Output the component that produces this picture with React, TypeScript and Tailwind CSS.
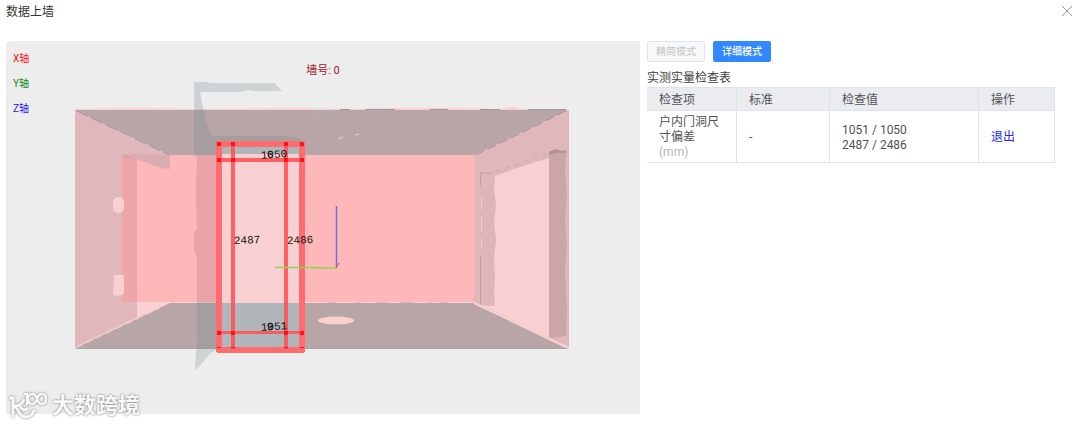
import React from "react";

const DOOR_X = [217, 231, 284, 300];
const DOOR_Y = [142, 158, 331, 347];

function RoomScene() {
  const joints = DOOR_X.flatMap((x) => DOOR_Y.map((y) => ({ x, y })));
  return (
    <svg viewBox="6 41 634 373" className="block w-full" role="img" aria-label="墙面三维视图">
      {/* shell */}
      <path d="M75 109 L130 108 L210 109 L300 108 L345 109 L400 108 L455 108 L500 109 L512 107 L525 109 L569 110 L569 347 L75 349Z" fill="#f8d0d2" />
      {/* left wall */}
      <path d="M75 110 L170 155 L170 169 L137 160 V317 L75 347Z" fill="#e0b8bc" />
      {/* back wall */}
      <path d="M122 154 H474 V302 H122Z" fill="#ffb8ba" />
      <path d="M122 154 L137 159 V302 H122Z" fill="#eda5a9" />
      <path d="M122 154 H170 V169 L160 168 L137 159 L122 156Z" fill="#dbacb0" />
      <path d="M75 110 L170 155 L122 154 H140Z" fill="#e0b8bc" />
      <path d="M122 154 L138 161 L126 157Z" fill="#c99ca0" />
      {/* ceiling */}
      <path d="M75 110 L568 110 L476 155 L170 155Z" fill="#b7a5a7" />
      <path d="M77 111 L104 124 L126 134 L148 145 L169 155" fill="none" stroke="#a89497" strokeDasharray="12 4" />
      {/* floor */}
      <path d="M75 348 L170 303 H474 L568 348Z" fill="#b7a5a7" />
      <path d="M76 348 L160 308" stroke="#e9c6c9" strokeDasharray="8 3" />
      <path d="M76 348.500 H568" stroke="#a9a3a5" />
      <path d="M340 109.500 H350 M365 109.500 H395 M430 109.500 H448 M480 109.500 H500 M528 109.500 H566" stroke="#a3989a" />
      <path d="M313 110 h11 v2 l-5 1z M324 110 h12 l-3 2 h-6z M371 110 h12 l-3 1.500 h-5z" fill="#a8b3b7" />
      <path d="M338 139 l5 -2 M355 135 l4 -1" stroke="#ead4d5" />
      <path d="M327 303 h8 M355 303 h6 M377 303 h10 M400 303 h14 M429 303 h4 M440 303 h7" stroke="#b7a5a7" strokeWidth="1" />
      {/* right wall */}
      <path d="M474 155 L569 110 V347 L474 303Z" fill="#e0b8bc" />
      <path d="M476 155 L568 110" stroke="#a89497" strokeDasharray="9 4" />
      <path d="M481 305 L494 306 V173 L549 154 V338Z" fill="#f8d0d2" />
      <path d="M480 173 L494 173 L549 154 L549 158 L520 167 L495 176 L494 190 L496 205 L494 222 L496 240 L494 258 L495 280 L494 290 L495 306 L480 305Z" fill="#deb5b9" />
      <path d="M549 151 L567 150 L565 170 L567 195 L565 220 L567 245 L565 270 L567 310 L566 336 L549 338Z" fill="#caa6a9" />
      <path d="M549 152 L555 149 L561 151 L566 151 V153 H556 L550 155Z" fill="#b49195" />
      <path d="M480.500 173 V186 M480.500 255 V304 M480 173 H492" fill="none" stroke="#c59fa3" />
      <path d="M495 172 L547 154" stroke="#d0a8ac" strokeDasharray="6 4" />
      <path d="M481.500 196 V248" stroke="#f0cbce" strokeDasharray="14 7" />
      <path d="M474 303 L568 348" stroke="#f8d0d2" strokeWidth="2" />
      {/* fixtures */}
      <rect x="113" y="197" width="11" height="16" rx="5" fill="#f8d0d2" />
      <path d="M114 275 H124 V294 L118 296 L113 295Z" fill="#f8d0d2" />
      <ellipse cx="336" cy="320.500" rx="18" ry="4" fill="#f8d0d2" />
      {/* door opening */}
      <rect x="220" y="145" width="82" height="204" fill="#f8d0d2" />
      <rect x="220" y="145" width="82" height="9" fill="#b0b5b9" />
      <rect x="220" y="303" width="82" height="46" fill="#b0b5b9" />
      {/* door leaf */}
      <path d="M194 82 H207 L210 83 H275 L278 87 L282 91 H255 L248 90 L240 92 H200 L205 118 L211 136 H286 L299 138 L304 142 H217 V349 L210 354 L196 370 L195 367 L197 340 V256 L194 250 V233 L197 229 L196 190 L198 160 L194 154Z" fill="#748d91" fillOpacity="0.26" />
      <path d="M197 155 H217 V302 H197 V256 L194 250 V233 L197 229 L196 190Z" fill="#eaa4a9" />
      {/* measured frame */}
      <g fill="#ff6c6f">
        <rect x="216" y="141" width="6" height="211" />
        <rect x="299" y="142" width="6" height="210" />
        <path d="M217 141 H301 L305 144 V147 H217Z" />
        <rect x="217" y="347" width="87" height="6" />
      </g>
      <g fill="#ff5356" fillOpacity="0.9">
        <rect x="231" y="143" width="4" height="206" />
        <rect x="284" y="143" width="4" height="206" />
        <rect x="218" y="158" width="86" height="4" />
        <rect x="218" y="331" width="86" height="3" />
      </g>
      {joints.map(({ x, y }) => (
        <rect key={`${x}-${y}`} x={x} y={y} width="4" height={y === 347 ? 1 : 4} fill="#f8141a" />
      ))}
      {/* axes */}
      <path d="M336.500 206 V267" stroke="#6c70dc" strokeWidth="1.500" />
      <path d="M275 267.500 H310 L323 268 H337" fill="none" stroke="#8fd34a" strokeWidth="1.500" />
      <path d="M336 268 L339 263" stroke="#d84a50" />
      <g className="font-['Liberation_Mono',monospace] text-[11px]" fill="#181214">
        <g transform="rotate(-3 273 158)">
          <text x="261" y="158">1050</text>
          <text x="267" y="158">6</text>
        </g>
        <text x="234" y="244" transform="rotate(-2 234 244)">2487</text>
        <text x="287" y="244" transform="rotate(-2 287 244)">2486</text>
        <g transform="rotate(-3 273 330)">
          <text x="261" y="330">1051</text>
          <text x="267" y="330">9</text>
        </g>
      </g>
    </svg>
  );
}

function Watermark() {
  return (
    <div className="absolute -bottom-1.5 left-[2px] flex items-center gap-1 text-[#f8f8f8] drop-shadow-[0_0_1px_#777]">
      <svg viewBox="0 0 40 28" className="h-7 w-10" fill="none" stroke="currentColor" strokeWidth="3" aria-hidden="true">
        <path d="M1 6 H5 V25 M16 7 C15 11 12 14 6 14 C11 15 10 25 18 25 C22 25 25 22 26 18 M12 14 C13 18 17 19 20 16" />
        <path d="M16 2 H19 V13" strokeWidth="2.500" />
        <path d="M29 7 C27 0 20 1 20 7 C20 13 27 14 29 7 C31 0 38 1 38 7 C38 13 31 14 29 7Z" strokeWidth="2.500" />
      </svg>
      <span className="text-[22px] leading-7 font-bold">大数跨境</span>
    </div>
  );
}

export default function App() {
  const head = "border-r border-[#dde4e6] px-3 pt-0.5 text-left font-normal";
  const cell = "border-r border-[#dde4e6] px-3 pt-1 pb-0.5";
  return (
    <main className="bg-white pr-[25px] pb-[11px] pl-[6px] font-[Roboto,'Noto_Sans_CJK_SC',sans-serif] text-xs text-[#505256]">
      <header className="-mr-[18px] flex h-[41px] items-start justify-between pt-1">
        <h1 className="leading-4 text-[#333]">数据上墙</h1>
        <button type="button" aria-label="关闭" className="flex h-3.5 w-3 items-center justify-center text-[#999]">
          <svg viewBox="0 0 12 12" className="h-3 w-3" fill="none" stroke="currentColor" aria-hidden="true">
            <path d="M1 1 L11 11 M11 1 L1 11" />
          </svg>
        </button>
      </header>
      <div className="grid grid-cols-[634fr_408fr] items-start gap-[7px]">
        <section className="relative rounded-tl bg-[#ededed]">
          <RoomScene />
          <ul className="absolute top-2.5 left-[7px] flex flex-col gap-[9px] text-[10px] leading-4">
            <li className="text-[#f01818]">X轴</li>
            <li className="text-[#108a20]">Y轴</li>
            <li className="text-[#2020e8]">Z轴</li>
          </ul>
          <p className="absolute top-[22px] left-1/2 -translate-x-1/2 text-[11px] leading-4 text-[#a02028]">墙号: 0</p>
          <Watermark />
        </section>
        <section>
          <div className="flex gap-2 text-[10px]">
            <button type="button" disabled className="h-[21px] rounded-xs border border-[#e2e3e6] bg-[#f7f8f9] px-2 text-[#c4c5c8]">精简模式</button>
            <button type="button" className="h-[21px] rounded-xs bg-[#3388ff] px-[9px] font-medium text-white">详细模式</button>
          </div>
          <table className="mt-2 w-full table-fixed border-separate border-spacing-0 leading-[15px]">
            <caption className="h-[17px] text-left leading-4 text-[#404040]">实测实量检查表</caption>
            <colgroup>
              <col />
              <col className="w-[93px]" />
              <col className="w-[149px]" />
              <col className="w-[76px]" />
            </colgroup>
            <thead>
              <tr className="h-6 bg-[#ebecf0]">
                <th className={`${head} border-y`}>检查项</th>
                <th className={`${head} border-y`}>标准</th>
                <th className={`${head} border-y`}>检查值</th>
                <th className={`${head} border-y`}>操作</th>
              </tr>
            </thead>
            <tbody>
              <tr>
                <td className={`${cell} border-b`}>
                  户内门洞尺寸偏差<br />
                  <span className="text-[#b8b8b8]">(mm)</span>
                </td>
                <td className={`${cell} border-b`}>-</td>
                <td className={`${cell} border-b`}>1051 / 1050<br />2487 / 2486</td>
                <td className={`${cell} border-b`}>
                  <a href="#exit" className="text-[#2525ee]">退出</a>
                </td>
              </tr>
            </tbody>
          </table>
        </section>
      </div>
    </main>
  );
}
